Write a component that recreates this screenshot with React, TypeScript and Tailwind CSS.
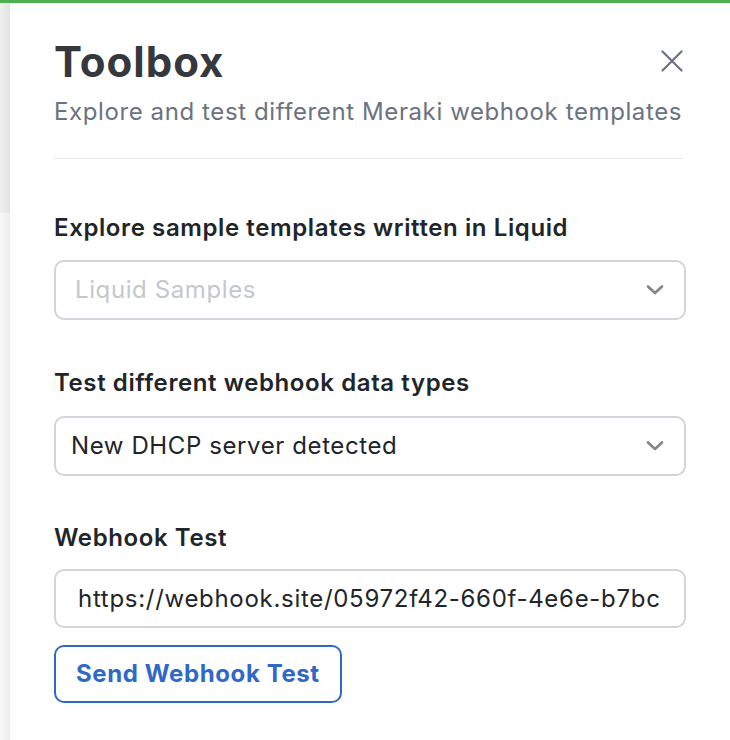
function Chevron() {
    return (
        <svg width="18" height="12" viewBox="0 0 18 12" fill="none" className="shrink-0">
            <path d="M2 2.5l7 6.5 7-6.5" stroke="#858585" strokeWidth="2.6" strokeLinecap="round" strokeLinejoin="round" />
        </svg>
    );
}

function Label({ children, className = "" }: { children: React.ReactNode; className?: string }) {
    return (
        <div className={`h-[28px] text-[24px] font-semibold leading-[28px] tracking-[0.6px] text-[#212529] ${className}`}>
            {children}
        </div>
    );
}

export default function App() {
    return (
        <div className="flex h-[740px] w-[730px] flex-col overflow-hidden bg-white font-['Inter',sans-serif]">
            <div className="h-[3px] shrink-0 bg-[#4caf50]" />
            <div className="flex flex-1">
                {/* page behind the drawer */}
                <div className="flex w-[10px] shrink-0 flex-col">
                    <div className="h-[210px] bg-gradient-to-r from-[#efefef] to-[#e3e3e3]" />
                    <div className="flex-1 bg-gradient-to-r from-[#f7f7f7] to-[#ececec]" />
                </div>

                <aside className="flex-1 px-[44px] pt-[39px]">
                    <div className="flex items-start justify-between">
                        <h1 className="h-[40px] text-[42px] font-bold leading-[40px] tracking-[1px] text-[#35383d]">
                            Toolbox
                        </h1>
                        <button className="mr-[3px] mt-[8px] text-[#6b7280]">
                            <svg width="22" height="22" viewBox="0 0 22 22" fill="none">
                                <path d="M1.5 1.5l19 19M20.5 1.5l-19 19" stroke="currentColor" strokeWidth="2.2" strokeLinecap="round" />
                            </svg>
                        </button>
                    </div>
                    <p className="mt-[16px] h-[28px] whitespace-nowrap text-[24px] leading-[28px] tracking-[0.6px] text-[#6b7280]">
                        Explore and test different Meraki webhook templates
                    </p>

                    <div className="mr-[3px] mt-[32px] h-px bg-[#e5e7eb]" />

                    <Label className="mt-[55px]">Explore sample templates written in Liquid</Label>
                    <div className="mt-[18px] flex h-[60px] items-center justify-between rounded-[10px] border-2 border-[#d1d5db] pl-[19px] pr-[20px]">
                        <span className="text-[24px] tracking-[0.6px] text-[#c4c8cc]">Liquid Samples</span>
                        <Chevron />
                    </div>

                    <Label className="mt-[49px]">Test different webhook data types</Label>
                    <div className="mt-[19px] flex h-[60px] items-center justify-between rounded-[10px] border-2 border-[#d1d5db] pl-[15px] pr-[20px]">
                        <span className="text-[24px] tracking-[0.6px] text-[#212529]">New DHCP server detected</span>
                        <Chevron />
                    </div>

                    <Label className="mt-[48px]">Webhook Test</Label>
                    <input
                        readOnly
                        value="https://webhook.site/05972f42-660f-4e6e-b7bc-3f1a9d2e8c41"
                        className="mt-[17px] block h-[59px] w-full rounded-[10px] border-2 border-[#d1d5db] px-[22px] font-['Inter',sans-serif] text-[24px] tracking-[0.7px] text-[#212529] outline-none"
                    />

                    <button className="mt-[17px] flex h-[58px] items-center rounded-[10px] border-2 border-[#3068c8] px-[20px] text-[24px] font-bold tracking-[0.6px] text-[#3068c8]">
                        Send Webhook Test
                    </button>
                </aside>
            </div>
        </div>
    );
}
